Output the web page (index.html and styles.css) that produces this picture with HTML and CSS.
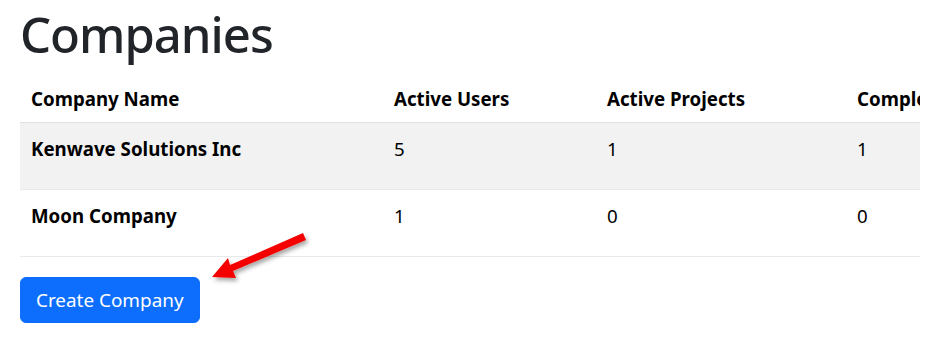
FILE: index.html
```html
<!DOCTYPE html>
<html lang="en">
<head>
    <meta charset="UTF-8">
    <title>Companies</title>
    <link rel="stylesheet" href="styles.css">
</head>
<body>
    <div class="container">
        <h1>Companies</h1>

        <div class="table-wrap">
            <table class="companies">
                <thead>
                    <tr>
                        <th class="col-name">Company Name</th>
                        <th class="col-users">Active Users</th>
                        <th class="col-projects">Active Projects</th>
                        <th class="col-completed">Completed Projects</th>
                    </tr>
                </thead>
                <tbody>
                    <tr class="striped">
                        <td class="name">Kenwave Solutions Inc</td>
                        <td>5</td>
                        <td>1</td>
                        <td>1</td>
                    </tr>
                    <tr>
                        <td class="name">Moon Company</td>
                        <td>1</td>
                        <td>0</td>
                        <td>0</td>
                    </tr>
                </tbody>
            </table>
        </div>

        <div class="actions">
            <button class="btn-primary" type="button">Create Company</button>
            <!-- callout arrow pointing at the button -->
            <svg class="callout" width="120" height="70" viewBox="0 0 120 70">
                <defs>
                    <filter id="arrowShadow" x="-20%" y="-20%" width="140%" height="160%">
                        <feDropShadow dx="2" dy="3" stdDeviation="2" flood-color="#000" flood-opacity="0.35"/>
                    </filter>
                </defs>
                <g filter="url(#arrowShadow)" fill="#f40000">
                    <polygon points="103,9 106,16 33,47 36,54 12,53 28,34 30,41"/>
                </g>
            </svg>
        </div>
    </div>
</body>
</html>
```

FILE: styles.css
```css
body {
    font-family: 'Noto Sans', 'Open Sans', sans-serif;
    color: #212529;
    background-color: #fff;
    margin: 0;
}

.container {
    width: 900px;
    padding: 0 0 0 20px;
}

h1 {
    font-size: 49px;
    font-weight: 500;
    line-height: 1.2;
    margin: 5px 0 10px;
    letter-spacing: -1px;
}

.table-wrap {
    overflow: hidden;
}

.companies {
    width: 1100px;
    border-collapse: collapse;
    font-size: 18.7px;
    color: #000;
}

.companies th,
.companies td {
    text-align: left;
    padding: 12px 11px 27px;
    line-height: 27px;
    vertical-align: top;
}

.companies th {
    font-weight: 700;
    padding-top: 11px;
    padding-bottom: 10px;
    border-bottom: 1px solid #dee2e6;
}

.companies td {
    border-bottom: 1px solid #e9e9e9;
}

.companies td.name {
    font-weight: 700;
}

.col-name { width: 341px; }
.col-users { width: 191px; }
.col-projects { width: 228px; }

.striped td {
    background-color: #f2f2f2;
}

.actions {
    position: relative;
    padding-top: 20px;
}

.btn-primary {
    font-family: inherit;
    font-size: 18.9px;
    color: #fff;
    background-color: #0d6efd;
    border: 1px solid #0d6efd;
    border-radius: 6px;
    padding: 8px 15px;
    line-height: 28px;
    cursor: pointer;
}

.callout {
    position: absolute;
    left: 180px;
    top: -33px;
}
```
